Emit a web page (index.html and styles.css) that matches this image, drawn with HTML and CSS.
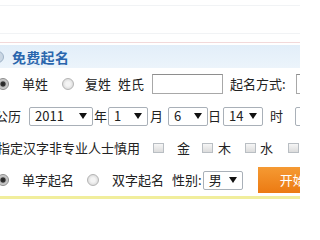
FILE: index.html
```html
<!DOCTYPE html>
<html lang="zh">
<head>
<meta charset="utf-8">
<link rel="stylesheet" href="styles.css">
</head>
<body>
<div class="frame">
<div class="page">
  <div class="top">
    <div class="faint l1"></div>
    <div class="faint l2"></div>
  </div>
  <div class="pink"></div>
  <div class="head">
    <span class="hicon"></span>
    <span class="htitle">免费起名</span>
  </div>
  <div class="form">
    <div class="row">
      <span class="radio on m13"></span>
      <span class="m14">单姓</span>
      <span class="radio m11"></span>
      <span class="m7">复姓</span>
      <span class="m8">姓氏</span>
      <span class="input m7"></span>
      <span class="m10">起名方式:</span>
      <span class="input"></span>
    </div>
    <div class="row">
      <span class="m8 lead">公历</span>
      <span class="select w64 m1"><span>2011</span><i class="arr"></i></span>
      <span class="m1">年</span>
      <span class="select w40 m2"><span>1</span><i class="arr"></i></span>
      <span class="m5">月</span>
      <span class="select w40"><span>6</span><i class="arr"></i></span>
      <span class="m2">日</span>
      <span class="select w40 m7"><span>14</span><i class="arr"></i></span>
      <span class="m12">时</span>
      <span class="select w40"><i class="arr"></i></span>
    </div>
    <div class="row">
      <span class="m13 lead2">指定汉字非专业人士慎用</span>
      <span class="check m13"></span>
      <span class="m12">金</span>
      <span class="check m5"></span>
      <span class="m14">木</span>
      <span class="check m4"></span>
      <span class="m15">水</span>
      <span class="check m4"></span>
    </div>
    <div class="row">
      <span class="radio on m13"></span>
      <span class="m13">单字起名</span>
      <span class="radio m13"></span>
      <span class="m8">双字起名</span>
      <span class="m1">性别:</span>
      <span class="select w40 m15"><span>男</span><i class="arr"></i></span>
      <span class="btn">开始起名</span>
    </div>
  </div>
  <div class="yline"></div>
</div>
</div>
</body>
</html>
```

FILE: styles.css
```css
html, body {
  margin: 0;
  padding: 0;
  background: #fff;
  overflow: hidden;
}
body {
  font-family: "Noto Sans CJK SC", "Noto Sans", sans-serif;
  font-size: 13px;
  color: #222;
}
.frame {
  width: 300px;
  height: 200px;
  overflow: hidden;
}
.page {
  width: 420px;
  margin-left: -3px;
}
.top {
  height: 42px;
  display: flex;
  flex-direction: column;
}
.faint {
  height: 1px;
  background: #f1f3f5;
}
.l1 { margin-top: 5px; }
.l2 { margin-top: 27px; }
.pink {
  height: 1px;
  background: #f2d9da;
}
.head {
  margin-top: 2px;
  height: 23px;
  background: linear-gradient(#e2eef9, #ecf4fb);
  display: flex;
  align-items: center;
}
.hicon {
  width: 10px;
  height: 10px;
  border-radius: 50%;
  background: #c9d6e3;
  border: 1px solid #9fb3c8;
  margin-left: -5px;
  margin-right: 8px;
  flex-shrink: 0;
}
.htitle {
  font-size: 14px;
  font-weight: bold;
  color: #2a66ad;
  letter-spacing: 0.3px;
}
.form {
  display: flex;
  flex-direction: column;
}
.row {
  height: 32px;
  display: flex;
  align-items: center;
  white-space: nowrap;
  line-height: 18px;
}
.row > * { flex-shrink: 0; }
.lead { margin-left: -2px; }
.lead2 { margin-left: 0; }
.m1 { margin-right: 1px; }
.m2 { margin-right: 2px; }
.m4 { margin-right: 4px; }
.m5 { margin-right: 5px; }
.m7 { margin-right: 7px; }
.m8 { margin-right: 8px; }
.m10 { margin-right: 10px; }
.m11 { margin-right: 11px; }
.m12 { margin-right: 12px; }
.m13 { margin-right: 13px; }
.m14 { margin-right: 14px; }
.m15 { margin-right: 15px; }
.radio {
  box-sizing: border-box;
  width: 12px;
  height: 12px;
  border-radius: 50%;
  border: 1px solid #b4b4b4;
  background: radial-gradient(circle at 50% 50%, #f4f4f4 0, #f4f4f4 30%, #cfcfcf 100%);
}
.radio.on {
  border-color: #8c8c8c;
  background: radial-gradient(circle at 50% 50%, #222 0, #333 30%, #bdbdbd 45%, #e0e0e0 100%);
}
.input {
  box-sizing: border-box;
  width: 71px;
  height: 20px;
  border: 1px solid #a8a8a8;
  border-top-color: #8e8e8e;
  background: #fff;
}
.select {
  box-sizing: border-box;
  height: 19px;
  border: 1px solid #a9b0b8;
  border-radius: 2px;
  background: #fff;
  display: flex;
  align-items: center;
  justify-content: space-between;
  padding: 0 5px 0 5px;
  font-size: 13px;
}
.w64 { width: 64px; }
.w40 { width: 40px; }
.arr {
  width: 0;
  height: 0;
  border-left: 4px solid transparent;
  border-right: 4px solid transparent;
  border-top: 6px solid #111;
}
.check {
  box-sizing: border-box;
  width: 11px;
  height: 10px;
  border: 1px solid #b9bec3;
  background: linear-gradient(#f6f6f6, #dcdcdc);
}
.btn {
  box-sizing: border-box;
  height: 26px;
  width: 90px;
  background: linear-gradient(#f59a33, #ec7a12);
  color: #fff;
  padding-left: 22px;
  display: flex;
  align-items: center;
  font-size: 13px;
}
.yline {
  height: 3px;
  background: #f1ee9c;
}
```
